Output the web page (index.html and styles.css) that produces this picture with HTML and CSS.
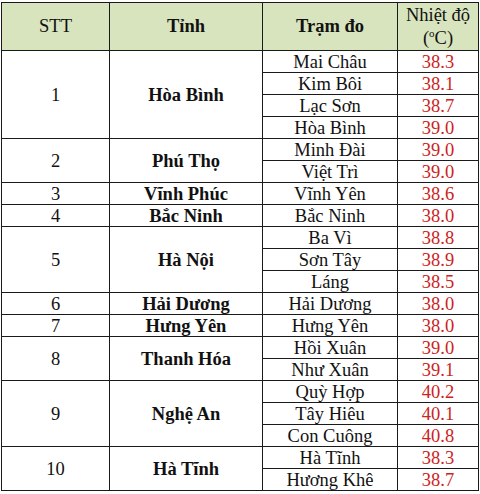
FILE: index.html
```html
<!DOCTYPE html>
<html lang="vi">
<head>
<meta charset="utf-8">
<link rel="stylesheet" href="styles.css">
</head>
<body>
<table class="temps">
  <colgroup>
    <col class="c-stt"><col class="c-tinh"><col class="c-tram"><col class="c-nd">
  </colgroup>
  <thead>
    <tr class="head">
      <th class="reg">STT</th>
      <th>Tỉnh</th>
      <th>Trạm đo</th>
      <th class="reg">Nhiệt độ<br>(<sup>o</sup>C)</th>
    </tr>
  </thead>
  <tbody>
    <tr><td rowspan="4">1</td><td rowspan="4" class="prov">Hòa Bình</td><td>Mai Châu</td><td class="t">38.3</td></tr>
    <tr><td>Kim Bôi</td><td class="t">38.1</td></tr>
    <tr><td>Lạc Sơn</td><td class="t">38.7</td></tr>
    <tr><td>Hòa Bình</td><td class="t">39.0</td></tr>
    <tr><td rowspan="2">2</td><td rowspan="2" class="prov">Phú Thọ</td><td>Minh Đài</td><td class="t">39.0</td></tr>
    <tr><td>Việt Trì</td><td class="t">39.0</td></tr>
    <tr><td>3</td><td class="prov">Vĩnh Phúc</td><td>Vĩnh Yên</td><td class="t">38.6</td></tr>
    <tr><td>4</td><td class="prov">Bắc Ninh</td><td>Bắc Ninh</td><td class="t">38.0</td></tr>
    <tr><td rowspan="3">5</td><td rowspan="3" class="prov">Hà Nội</td><td>Ba Vì</td><td class="t">38.8</td></tr>
    <tr><td>Sơn Tây</td><td class="t">38.9</td></tr>
    <tr><td>Láng</td><td class="t">38.5</td></tr>
    <tr><td>6</td><td class="prov">Hải Dương</td><td>Hải Dương</td><td class="t">38.0</td></tr>
    <tr><td>7</td><td class="prov">Hưng Yên</td><td>Hưng Yên</td><td class="t">38.0</td></tr>
    <tr><td rowspan="2">8</td><td rowspan="2" class="prov">Thanh Hóa</td><td>Hồi Xuân</td><td class="t">39.0</td></tr>
    <tr><td>Như Xuân</td><td class="t">39.1</td></tr>
    <tr><td rowspan="3">9</td><td rowspan="3" class="prov">Nghệ An</td><td>Quỳ Hợp</td><td class="t">40.2</td></tr>
    <tr><td>Tây Hiêu</td><td class="t">40.1</td></tr>
    <tr><td>Con Cuông</td><td class="t">40.8</td></tr>
    <tr><td rowspan="2">10</td><td rowspan="2" class="prov">Hà Tĩnh</td><td>Hà Tĩnh</td><td class="t">38.3</td></tr>
    <tr><td>Hương Khê</td><td class="t">38.7</td></tr>
  </tbody>
</table>
</body>
</html>
```

FILE: styles.css
```css
html, body {
  margin: 0;
  padding: 0;
  background: #ffffff;
}
body {
  padding: 2px 0 0 1px;
  font-family: "Liberation Serif", "Times New Roman", serif;
  font-size: 18.5px;
  color: #111111;
}
.temps {
  border-collapse: collapse;
  table-layout: fixed;
  width: 477px;
}
.c-stt { width: 108px; }
.c-tinh { width: 153px; }
.c-tram { width: 135px; }
.c-nd { width: 81px; }
.temps th, .temps td {
  border: 1px solid #1a1a1a;
  padding: 0;
  text-align: center;
  vertical-align: middle;
  line-height: 20px;
  overflow: hidden;
}
.temps tbody tr {
  height: 22px;
}
.head {
  height: 48px;
  background: #d8e4bd;
}
.head th {
  font-weight: bold;
  line-height: 23px;
}
.head th.reg {
  font-weight: normal;
}
.head sup {
  font-size: 11px;
  vertical-align: 7px;
  line-height: 0;
}
.prov {
  font-weight: bold;
}
.t {
  color: #cc2222;
}
```
